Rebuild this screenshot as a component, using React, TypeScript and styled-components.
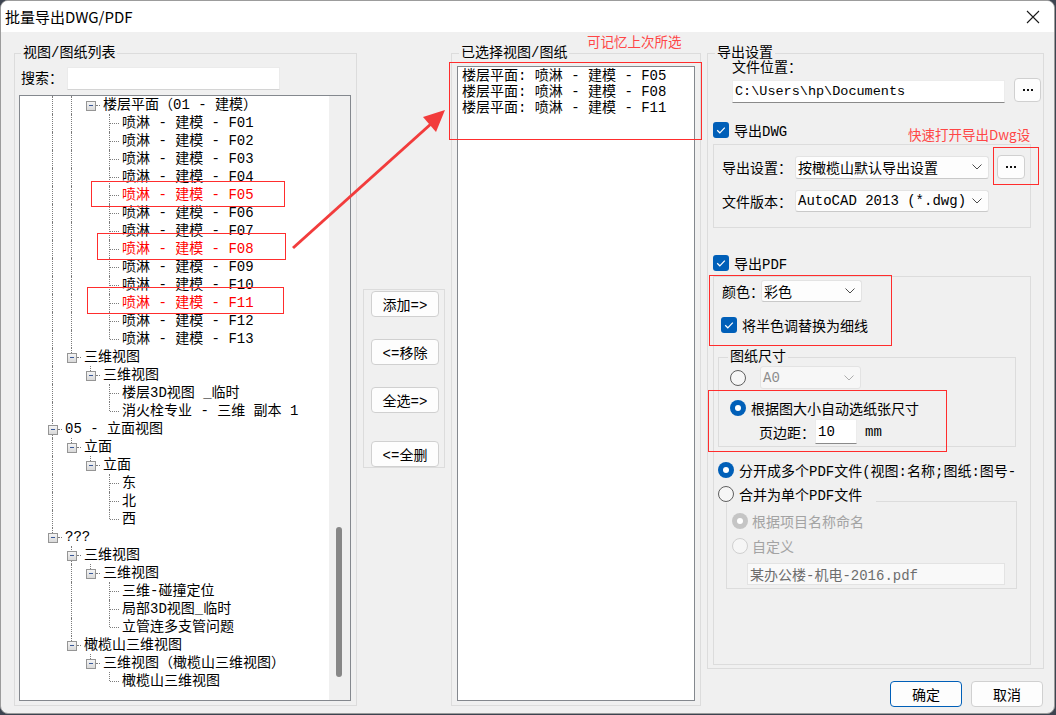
import React from "react";
import styled, { createGlobalStyle, css } from "styled-components";

const MONO = `"Liberation Mono", "Noto Sans CJK SC", monospace`;
const UI = `"Noto Sans CJK SC", "Noto Sans", sans-serif`;

const GlobalStyle = createGlobalStyle`
  html, body { margin: 0; padding: 0; background: #3d4450; }
  body { font-family: ${MONO}; font-size: 14px; color: #000; }
  * { box-sizing: border-box; }
`;

type Row = { d: number; label: string; leaf?: boolean; red?: boolean };

const floors: Row[] = Array.from({ length: 13 }, (_, i) => {
  const n = String(i + 1).padStart(2, "0");
  return { d: 3, label: `喷淋 - 建模 - F${n}`, leaf: true, red: ["05", "08", "11"].includes(n) };
});

const tree: Row[] = [
  { d: 2, label: "楼层平面（01 - 建模）" },
  ...floors,
  { d: 1, label: "三维视图" },
  { d: 2, label: "三维视图" },
  { d: 3, label: "楼层3D视图 _临时", leaf: true },
  { d: 3, label: "消火栓专业 - 三维 副本 1", leaf: true },
  { d: 0, label: "05 - 立面视图" },
  { d: 1, label: "立面" },
  { d: 2, label: "立面" },
  { d: 3, label: "东", leaf: true },
  { d: 3, label: "北", leaf: true },
  { d: 3, label: "西", leaf: true },
  { d: 0, label: "???" },
  { d: 1, label: "三维视图" },
  { d: 2, label: "三维视图" },
  { d: 3, label: "三维-碰撞定位", leaf: true },
  { d: 3, label: "局部3D视图_临时", leaf: true },
  { d: 3, label: "立管连多支管问题", leaf: true },
  { d: 1, label: "橄榄山三维视图" },
  { d: 2, label: "三维视图（橄榄山三维视图）" },
  { d: 3, label: "橄榄山三维视图", leaf: true },
];

// does a sibling at `depth` follow row i before the branch closes
const hasNext = (i: number, depth: number) => {
  for (let j = i + 1; j < tree.length; j++) {
    if (tree[j].d < depth) return false;
    if (tree[j].d === depth) return true;
  }
  return false;
};

const selected = ["F05", "F08", "F11"];

/* ---------- window frame ---------- */

const Window = styled.div`
  position: relative;
  width: 1055px;
  height: 714px;
  background: #f0f0f0;
  border: 1px solid #9c9c9c;
  border-radius: 8px;
  overflow: hidden;
  display: flex;
  flex-direction: column;
`;

const TitleBar = styled.div`
  height: 31px;
  flex: none;
  background: #fff;
  display: flex;
  align-items: center;
  justify-content: space-between;
  padding: 0 14px 0 4px;
  font-family: ${UI};
  font-size: 15px;
`;

const Body = styled.div`
  flex: 1;
  display: flex;
  padding: 12px 10px 0 13px;
`;

const GroupBox = styled.fieldset<{ $w: number; $h: number; $pl?: number }>`
  margin: 0;
  padding: 0 5px 4px ${(p) => p.$pl ?? 5}px;
  width: ${(p) => p.$w}px;
  height: ${(p) => p.$h}px;
  min-width: 0;
  flex: none;
  border: 1px solid #dcdcdc;
`;

const Legend = styled.legend`
  padding: 0 2px;
  margin-left: 2px;
  font-size: 14px;
  line-height: 18px;
`;

/* ---------- left: tree ---------- */

const SearchRow = styled.div`
  display: flex;
  align-items: center;
  margin: 5px 0;
  padding-left: 2px;
  height: 23px;
`;

const SearchLabel = styled.span`
  width: 46px;
  margin-top: -4px;
`;

const SearchInput = styled.div`
  width: 213px;
  height: 23px;
  background: #fff;
  border: 1px solid #ebebeb;
  border-bottom-color: #d4d4d4;
`;

const TreeBox = styled.div`
  height: 606px;
  border: 1px solid #84888e;
  background: #fff;
  display: flex;
`;

const TreeContent = styled.div`
  flex: 1;
  overflow: hidden;
  padding-left: 23px;
`;

const TreeRow = styled.div`
  display: flex;
  height: 18px;
  white-space: nowrap;
`;

const Guide = styled.span<{ $line: boolean }>`
  position: relative;
  width: 19px;
  flex: none;
  ${(p) =>
    p.$line &&
    css`
      &::before {
        content: "";
        position: absolute;
        left: 9px;
        top: 0;
        bottom: 0;
        border-left: 1px dotted #7c7c7c;
      }
    `}
`;

const Joint = styled.span<{ $up: boolean; $down: boolean; $leaf: boolean }>`
  position: relative;
  width: 19px;
  flex: none;
  &::before {
    content: "";
    position: absolute;
    left: 9px;
    top: ${(p) => (p.$up ? 0 : 9)}px;
    bottom: ${(p) => (p.$down ? 0 : 9)}px;
    border-left: 1px dotted #7c7c7c;
  }
  &::after {
    content: "";
    position: absolute;
    top: 9px;
    left: ${(p) => (p.$leaf ? 10 : 15)}px;
    right: 0;
    border-top: 1px dotted #7c7c7c;
  }
`;

const Expander = styled.span`
  position: absolute;
  z-index: 1;
  left: 5px;
  top: 5px;
  width: 10px;
  height: 10px;
  border: 1px solid #959595;
  background: linear-gradient(#f4f4f4, #d9d9d9);
  &::after {
    content: "";
    position: absolute;
    left: 2px;
    right: 2px;
    top: 3px;
    border-top: 1px solid #3a5998;
  }
`;

const NodeLabel = styled.span<{ $red?: boolean }>`
  padding-left: 3px;
  line-height: 18px;
  color: ${(p) => (p.$red ? "#ff0000" : "#000")};
`;

const ScrollTrack = styled.div`
  width: 21px;
  flex: none;
  background: #f0f0f0;
  padding: 431px 0 0 7px;
`;

const ScrollThumb = styled.div`
  width: 6px;
  height: 150px;
  border-radius: 3px;
  background: #878787;
`;

/* ---------- middle ---------- */

const ButtonColumn = styled.div`
  width: 94px;
  flex: none;
  display: flex;
  align-items: center;
  padding-left: 6px;
`;

const ButtonStack = styled.div`
  width: 82px;
  border: 1px solid #dcdcdc;
  padding: 1px 5px 0 7px;
  display: flex;
  flex-direction: column;
`;

const PushButton = styled.button<{ $w: number; $h: number; $primary?: boolean; $mt?: number }>`
  width: ${(p) => p.$w}px;
  height: ${(p) => p.$h}px;
  margin-top: ${(p) => p.$mt ?? 0}px;
  padding: 0;
  flex: none;
  background: #fdfdfd;
  border: 1px solid ${(p) => (p.$primary ? "#005fb8" : "#d0d0d0")};
  border-radius: 4px;
  font-family: ${MONO};
  font-size: 14px;
  color: #000;
`;

const ListBox = styled.div`
  margin-top: 4px;
  height: 635px;
  border: 1px solid #84888e;
  background: #fff;
  padding: 1px 0 0 4px;
  line-height: 16px;
  white-space: nowrap;
`;

/* ---------- right ---------- */

const RightColumn = styled.div`
  margin-left: 6px;
  width: 337px;
  flex: none;
  display: flex;
  flex-direction: column;
`;

const FieldLabel = styled.div<{ $ml?: number }>`
  margin: -2px 0 0 ${(p) => p.$ml ?? 19}px;
  line-height: 16px;
`;

const PathRow = styled.div`
  display: flex;
  align-items: flex-start;
  gap: 9px;
  margin: 2px 0 0 19px;
`;

const TextInput = styled.div<{ $w: number; $h: number; $disabled?: boolean }>`
  width: ${(p) => p.$w}px;
  height: ${(p) => p.$h}px;
  flex: none;
  display: flex;
  align-items: center;
  padding-left: 2px;
  background: ${(p) => (p.$disabled ? "#f9f9f9" : "#fff")};
  border: 1px solid ${(p) => (p.$disabled ? "#e3e3e3" : "#ececec")};
  border-bottom-color: ${(p) => (p.$disabled ? "#e3e3e3" : "#8a8a8a")};
  color: ${(p) => (p.$disabled ? "#6d6d6d" : "#000")};
  white-space: nowrap;
`;

const PathText = styled.span`
  font-size: 13.5px;
`;

const DotsButton = styled.div<{ $w: number }>`
  width: ${(p) => p.$w}px;
  height: 24px;
  flex: none;
  display: flex;
  align-items: center;
  justify-content: center;
  background: #fdfdfd;
  border: 1px solid #d0d0d0;
  border-radius: 4px;
`;

const OptionRow = styled.div<{ $mt?: number; $ml?: number; $h?: number; $gap?: number }>`
  display: flex;
  align-items: center;
  gap: ${(p) => p.$gap ?? 5}px;
  height: ${(p) => p.$h ?? 18}px;
  margin: ${(p) => p.$mt ?? 0}px 0 0 ${(p) => p.$ml ?? 0}px;
  white-space: nowrap;
`;

const CheckMark = styled.span`
  width: 16px;
  height: 16px;
  flex: none;
  border-radius: 3px;
  background: #005fb8;
  display: flex;
  align-items: center;
  justify-content: center;
`;

const Radio = styled.span<{ $on?: boolean; $disabled?: boolean }>`
  position: relative;
  width: 16px;
  height: 16px;
  flex: none;
  border-radius: 50%;
  ${(p) =>
    p.$on
      ? css`
          background: ${p.$disabled ? "#c5c5c5" : "#005fb8"};
          &::after {
            content: "";
            position: absolute;
            left: 5px;
            top: 5px;
            width: 6px;
            height: 6px;
            border-radius: 50%;
            background: #fff;
          }
        `
      : css`
          background: #f6f6f6;
          border: 1px solid ${p.$disabled ? "#d0d0d0" : "#5f5f5f"};
        `}
`;

const OptionText = styled.span<{ $muted?: boolean }>`
  color: ${(p) => (p.$muted ? "#a3a3a3" : "#000")};
`;

const Panel = styled.div<{ $h: number; $mt: number }>`
  width: 318px;
  height: ${(p) => p.$h}px;
  margin-top: ${(p) => p.$mt}px;
  border: 1px solid #dcdcdc;
`;

const DwgPanel = styled(Panel)`
  padding: 10px 0 0 8px;
`;

const FormRow = styled.div<{ $mt?: number; $ml?: number }>`
  display: flex;
  align-items: center;
  margin: ${(p) => p.$mt ?? 0}px 0 0 ${(p) => p.$ml ?? 0}px;
`;

const RowLabel = styled.span<{ $w: number }>`
  width: ${(p) => p.$w}px;
  flex: none;
  white-space: nowrap;
`;

const SelectBox = styled.div<{ $w: number; $h: number; $disabled?: boolean }>`
  width: ${(p) => p.$w}px;
  height: ${(p) => p.$h}px;
  flex: none;
  display: flex;
  align-items: center;
  justify-content: space-between;
  padding: 0 6px 0 2px;
  background: ${(p) => (p.$disabled ? "#f7f7f7" : "#fdfdfd")};
  border: 1px solid #e3e3e3;
  border-bottom-color: ${(p) => (p.$disabled ? "#e3e3e3" : "#c9c9c9")};
  border-radius: 3px;
  color: ${(p) => (p.$disabled ? "#8d8d8d" : "#000")};
  white-space: nowrap;
`;

const PaperGroup = styled.fieldset`
  margin: 15px 0 0 4px;
  padding: 0 0 0 7px;
  width: 298px;
  height: 99px;
  min-width: 0;
  border: 1px solid #dcdcdc;
`;

const SplitRow = styled(OptionRow)`
  width: 312px;
  overflow: hidden;
`;

const MergeRow = styled.div`
  position: relative;
  z-index: 1;
  width: 158px;
  height: 20px;
  margin: 4px 0 0 4px;
  padding-top: 1px;
  display: flex;
  align-items: center;
  gap: 5px;
  background: #f0f0f0;
  white-space: nowrap;
`;

const SubPanel = styled.div`
  margin: -2px 0 0 12px;
  width: 291px;
  height: 88px;
  border: 1px solid #dcdcdc;
  padding: 10px 0 0 5px;
`;

const Footer = styled.div`
  display: flex;
  justify-content: flex-end;
  gap: 9px;
  margin-top: 12px;
  padding-right: 1px;
`;

/* ---------- annotations laid over the screenshot ---------- */

const Overlay = styled.div`
  position: absolute;
  left: -1px;
  top: -1px;
  width: 1056px;
  height: 715px;
  pointer-events: none;
  z-index: 5;
`;

const RedBox = styled.div<{ $x: number; $y: number; $w: number; $h: number }>`
  position: absolute;
  left: ${(p) => p.$x}px;
  top: ${(p) => p.$y}px;
  width: ${(p) => p.$w}px;
  height: ${(p) => p.$h}px;
  border: 1px solid #ff2d2d;
`;

const RedNote = styled.div<{ $x: number; $y: number }>`
  position: absolute;
  left: ${(p) => p.$x}px;
  top: ${(p) => p.$y}px;
  font-family: ${UI};
  font-size: 13.5px;
  line-height: 18px;
  color: #ff4646;
  white-space: nowrap;
`;

const ArrowSvg = styled.svg`
  position: absolute;
  left: 0;
  top: 0;
`;

const Chevron = () => (
  <svg width="10" height="6" viewBox="0 0 10 6">
    <polyline points="0.5,0.5 5,5 9.5,0.5" fill="none" stroke="currentColor" strokeWidth="1" opacity="0.7" />
  </svg>
);

const Dots = () => (
  <svg width="10" height="2" viewBox="0 0 10 2">
    <rect x="0" y="0" width="2" height="2" fill="#111" />
    <rect x="4" y="0" width="2" height="2" fill="#111" />
    <rect x="8" y="0" width="2" height="2" fill="#111" />
  </svg>
);

const Check = () => (
  <CheckMark>
    <svg width="12" height="12" viewBox="0 0 12 12">
      <polyline points="2.2,6.3 4.8,8.8 9.8,3.6" fill="none" stroke="#fff" strokeWidth="1.2" />
    </svg>
  </CheckMark>
);

const marks = [
  { x: 91, y: 181, w: 194, h: 26 },
  { x: 97, y: 233, w: 189, h: 27 },
  { x: 87, y: 287, w: 197, h: 27 },
  { x: 449, y: 62, w: 253, h: 78 },
  { x: 993, y: 147, w: 46, h: 38 },
  { x: 709, y: 275, w: 183, h: 71 },
  { x: 708, y: 390, w: 239, h: 62 },
];

const App = () => {
  return (
    <>
      <GlobalStyle />
      <Window>
        <TitleBar>
          <span>批量导出DWG/PDF</span>
          <svg width="14" height="14" viewBox="0 0 14 14">
            <path d="M1 1L13 13M13 1L1 13" stroke="#1a1a1a" strokeWidth="1.1" />
          </svg>
        </TitleBar>
        <Body>
          <GroupBox $w={343} $h={662} $pl={4}>
            <Legend>视图/图纸列表</Legend>
            <SearchRow>
              <SearchLabel>搜索：</SearchLabel>
              <SearchInput />
            </SearchRow>
            <TreeBox>
              <TreeContent>
                {tree.map((row, i) => (
                  <TreeRow key={i}>
                    {Array.from({ length: row.d }, (_, k) => (
                      <Guide key={k} $line={hasNext(i, k)} />
                    ))}
                    <Joint $up={i > 0} $down={hasNext(i, row.d)} $leaf={!!row.leaf}>
                      {!row.leaf && <Expander />}
                    </Joint>
                    <NodeLabel $red={row.red}>{row.label}</NodeLabel>
                  </TreeRow>
                ))}
              </TreeContent>
              <ScrollTrack>
                <ScrollThumb />
              </ScrollTrack>
            </TreeBox>
          </GroupBox>

          <ButtonColumn>
            <ButtonStack>
              <PushButton $w={68} $h={26}>添加=&gt;</PushButton>
              <PushButton $w={68} $h={26} $mt={22}>&lt;=移除</PushButton>
              <PushButton $w={68} $h={26} $mt={22}>全选=&gt;</PushButton>
              <PushButton $w={68} $h={26} $mt={28}>&lt;=全删</PushButton>
            </ButtonStack>
          </ButtonColumn>

          <GroupBox $w={250} $h={662}>
            <Legend>已选择视图/图纸</Legend>
            <ListBox>
              {selected.map((f) => (
                <div key={f}>楼层平面: 喷淋 - 建模 - {f}</div>
              ))}
            </ListBox>
          </GroupBox>

          <RightColumn>
            <GroupBox $w={337} $h={625}>
              <Legend>导出设置</Legend>
              <FieldLabel>文件位置：</FieldLabel>
              <PathRow>
                <TextInput $w={273} $h={23} style={{ marginTop: 2 }}>
                  <PathText>C:\Users\hp\Documents</PathText>
                </TextInput>
                <DotsButton $w={27}>
                  <Dots />
                </DotsButton>
              </PathRow>

              <OptionRow $mt={18}>
                <Check />
                <span>导出DWG</span>
              </OptionRow>
              <DwgPanel $h={84} $mt={5}>
                <FormRow>
                  <RowLabel $w={73}>导出设置：</RowLabel>
                  <SelectBox $w={194} $h={23}>
                    <span>按橄榄山默认导出设置</span>
                    <Chevron />
                  </SelectBox>
                  <DotsButton $w={28} style={{ marginLeft: 8 }}>
                    <Dots />
                  </DotsButton>
                </FormRow>
                <FormRow $mt={11}>
                  <RowLabel $w={73}>文件版本：</RowLabel>
                  <SelectBox $w={194} $h={22}>
                    <span>AutoCAD 2013 (*.dwg)</span>
                    <Chevron />
                  </SelectBox>
                </FormRow>
              </DwgPanel>

              <OptionRow $mt={26} $h={17}>
                <Check />
                <span>导出PDF</span>
              </OptionRow>
              <Panel $h={389} $mt={5}>
                <FormRow $mt={3} $ml={8}>
                  <RowLabel $w={39}>颜色：</RowLabel>
                  <SelectBox $w={101} $h={22}>
                    <span>彩色</span>
                    <Chevron />
                  </SelectBox>
                </FormRow>
                <OptionRow $mt={15} $ml={7} $h={16}>
                  <Check />
                  <span>将半色调替换为细线</span>
                </OptionRow>

                <PaperGroup>
                  <Legend>图纸尺寸</Legend>
                  <OptionRow $ml={4} $h={23} $gap={14}>
                    <Radio />
                    <SelectBox $w={101} $h={23} $disabled>
                      <span>A0</span>
                      <Chevron />
                    </SelectBox>
                  </OptionRow>
                  <OptionRow $mt={10} $ml={4}>
                    <Radio $on />
                    <span>根据图大小自动选纸张尺寸</span>
                  </OptionRow>
                  <OptionRow $mt={2} $ml={33} $h={25} $gap={0}>
                    <RowLabel $w={56}>页边距：</RowLabel>
                    <TextInput $w={42} $h={25}>
                      10
                    </TextInput>
                    <span style={{ marginLeft: 8 }}>mm</span>
                  </OptionRow>
                </PaperGroup>

                <SplitRow $mt={14} $ml={4}>
                  <Radio $on />
                  <span>分开成多个PDF文件(视图:名称;图纸:图号-</span>
                </SplitRow>
                <MergeRow>
                  <Radio />
                  <span>合并为单个PDF文件</span>
                </MergeRow>
                <SubPanel>
                  <OptionRow $gap={4}>
                    <Radio $on $disabled />
                    <OptionText $muted>根据项目名称命名</OptionText>
                  </OptionRow>
                  <OptionRow $mt={7} $gap={4}>
                    <Radio $disabled />
                    <OptionText $muted>自定义</OptionText>
                  </OptionRow>
                  <TextInput $w={258} $h={22} $disabled style={{ margin: "8px 0 0 15px" }}>
                    某办公楼-机电-2016.pdf
                  </TextInput>
                </SubPanel>
              </Panel>
            </GroupBox>
            <Footer>
              <PushButton $w={72} $h={26} $primary>
                确定
              </PushButton>
              <PushButton $w={72} $h={26}>
                取消
              </PushButton>
            </Footer>
          </RightColumn>
        </Body>

        <Overlay>
          {marks.map((m, i) => (
            <RedBox key={i} $x={m.x} $y={m.y} $w={m.w} $h={m.h} />
          ))}
          <RedNote $x={587} $y={32}>可记忆上次所选</RedNote>
          <RedNote $x={908} $y={125}>快速打开导出Dwg设</RedNote>
          <ArrowSvg width="1056" height="715" viewBox="0 0 1056 715">
            <line x1="293" y1="248" x2="432" y2="123" stroke="#f23c3c" strokeWidth="3" />
            <polygon points="445,110 436,132 423,117" fill="#f23c3c" />
          </ArrowSvg>
        </Overlay>
      </Window>
    </>
  );
};

export default App;
